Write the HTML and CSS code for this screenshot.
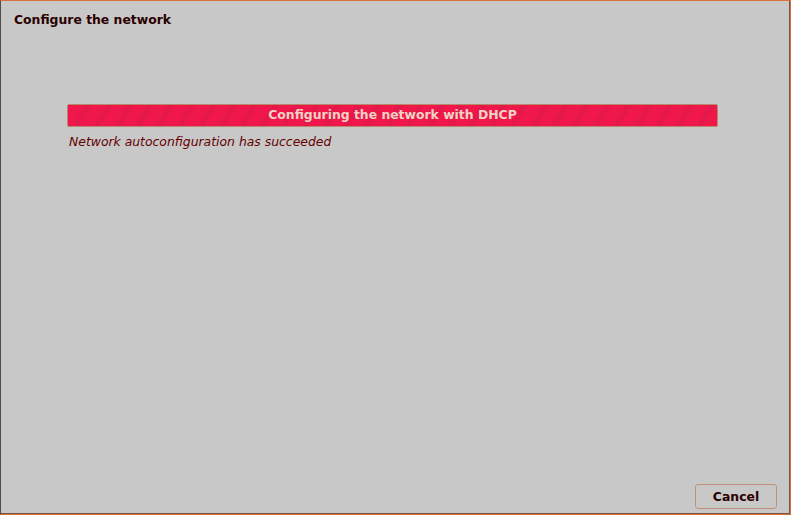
FILE: index.html
```html
<!DOCTYPE html>
<html>
<head>
<meta charset="utf-8">
<link rel="stylesheet" href="styles.css">
</head>
<body>
<div class="window">
  <div class="title">Configure the network</div>
  <div class="content">
    <div class="progress">
      <div class="progress-fill"></div>
      <div class="progress-label">Configuring the network with DHCP</div>
    </div>
    <div class="status">Network autoconfiguration has succeeded</div>
  </div>
  <div class="buttons">
    <button class="btn">Cancel</button>
  </div>
</div>
</body>
</html>
```
FILE: styles.css
```css
html, body {
  margin: 0;
  padding: 0;
  background: #c8c8c8;
}
body {
  width: 791px;
  height: 515px;
  font-family: "DejaVu Sans", sans-serif;
  font-size: 12.4px;
}
.window {
  box-sizing: border-box;
  width: 791px;
  height: 515px;
  border-top: 1px solid #d8703e;
  border-right: 1px solid #d8703e;
  border-bottom: 1px solid #d8703e;
  border-left: 1px solid #5a4a44;
  box-shadow: inset -1px -1px 0 #7a5040;
  display: flex;
  flex-direction: column;
  background: #c8c8c8;
}
.title {
  font-weight: bold;
  color: #2a0000;
  padding: 11px 0 0 13px;
  height: 20px;
  line-height: 16px;
}
.content {
  flex: 1;
  padding: 72px 72px 0 66px;
}
.progress {
  position: relative;
  height: 23px;
  box-sizing: border-box;
  border: 1px solid #b88a6a;
  border-radius: 2px;
  overflow: hidden;
  background: #f0174a;
}
.progress-fill {
  position: absolute;
  inset: 0;
  background: repeating-linear-gradient(
    -60deg,
    #f0174a 0px,
    #f0174a 12px,
    #e4184a 12px,
    #e4184a 18px
  );
}
.progress-label {
  position: relative;
  text-align: center;
  font-weight: bold;
  color: #f2d2c4;
  line-height: 20px;
}
.status {
  margin-top: 7px;
  padding-left: 2px;
  font-style: italic;
  color: #640000;
  line-height: 16px;
}
.buttons {
  display: flex;
  justify-content: flex-end;
  padding: 0 13px 5px 0;
}
.btn {
  width: 82px;
  height: 25px;
  box-sizing: border-box;
  border: 1px solid #c0907a;
  border-radius: 3px;
  background: #c8c8c8;
  font-family: "DejaVu Sans", sans-serif;
  font-size: 12.4px;
  font-weight: bold;
  color: #2a0000;
  padding: 0;
}
```
